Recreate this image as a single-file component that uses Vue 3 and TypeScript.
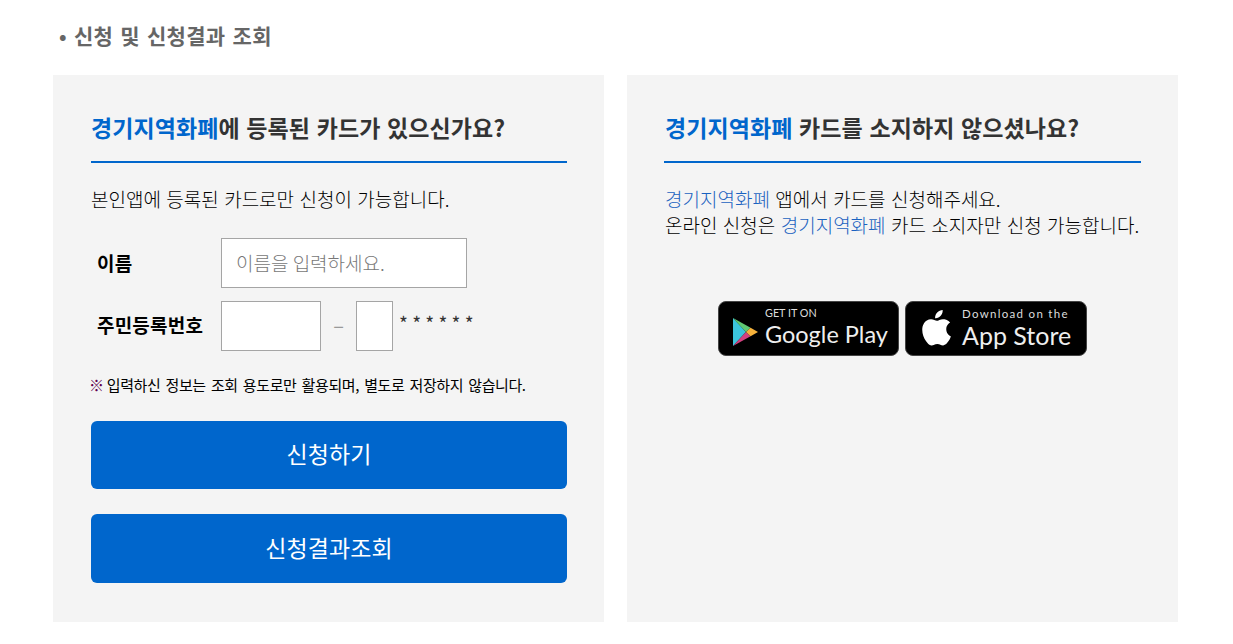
<template>
  <div class="page">
    <h2 class="page-title"><span class="bullet">•</span>신청 및 신청결과 조회</h2>
    <div class="panels">
      <!-- 카드 소지자 -->
      <section class="panel">
        <h3 class="panel-title"><span class="blue">경기지역화폐</span>에 등록된 카드가 있으신가요?</h3>
        <p class="desc">본인앱에 등록된 카드로만 신청이 가능합니다.</p>
        <div class="form-row">
          <label class="label">이름</label>
          <input class="input name" type="text" placeholder="이름을 입력하세요." />
        </div>
        <div class="form-row second">
          <label class="label">주민등록번호</label>
          <input class="input front" type="text" />
          <span class="dash">–</span>
          <input class="input back" type="text" />
          <span class="stars">* * * * * *</span>
        </div>
        <p class="notice"><span class="mark">※</span> 입력하신 정보는 조회 용도로만 활용되며, 별도로 저장하지 않습니다.</p>
        <button class="btn" type="button"><span class="btn-text">신청하기</span></button>
        <button class="btn last" type="button"><span class="btn-text">신청결과조회</span></button>
      </section>

      <!-- 카드 미소지자 -->
      <section class="panel right">
        <h3 class="panel-title"><span class="blue">경기지역화폐</span> 카드를 소지하지 않으셨나요?</h3>
        <p class="desc">
          <span class="link">경기지역화폐</span> 앱에서 카드를 신청해주세요.<br />
          온라인 신청은 <span class="link">경기지역화폐</span> 카드 소지자만 신청 가능합니다.
        </p>
        <div class="badges">
          <a class="badge play">
            <svg class="play-icon" viewBox="0 0 27 30" width="25" height="28">
              <path d="M0 0 L14 15 L0 30 Z" fill="#3bc4dc" />
              <path d="M0 0 L19 10.500 L14 15 Z" fill="#5fc873" />
              <path d="M0 30 L14 15 L19 19.500 Z" fill="#d2407f" />
              <path d="M19 10.500 L27 15 L19 19.500 L14 15 Z" fill="#f7b23c" />
            </svg>
            <span class="badge-text">
              <span class="small play-small">GET IT ON</span>
              <span class="big">Google Play</span>
            </span>
          </a>
          <a class="badge apple">
            <svg class="apple-icon" viewBox="2 1 25 31" width="29" height="36">
              <path fill="#fff" d="M19.8 1c.2 2-.6 3.700-1.700 5-1.200 1.300-2.900 2.300-4.800 2.100-.2-1.900.7-3.800 1.800-5C16.300 1.900 18.200 1 19.800 1zM26.200 11.700c-.2.100-3.300 1.900-3.300 5.800 0 4.500 3.900 6 4 6.100-.1.200-.6 2.200-2 4.200-1.300 1.800-2.600 3.600-4.700 3.700-2 0-2.700-1.200-5-1.200s-3.100 1.200-5 1.200c-2 .1-3.500-1.900-4.800-3.700C2.800 24.100.8 17.400 3.500 12.800c1.300-2.300 3.700-3.700 6.300-3.800 2 0 3.800 1.300 5 1.300s3.300-1.600 5.600-1.400c1 0 3.700.4 5.800 2.800z" />
            </svg>
            <span class="badge-text">
              <span class="small apple-small">Download on the</span>
              <span class="big apple-big">App Store</span>
            </span>
          </a>
        </div>
      </section>
    </div>
  </div>
</template>

<script setup lang="ts">
</script>

<style>
html,
body {
  margin: 0;
  background: #fff;
}
</style>

<style scoped>
.page {
  width: 1233px;
  height: 644px;
  overflow: hidden;
  box-sizing: border-box;
  padding: 0 55px 22px 53px;
  font-family: "Noto Sans CJK KR", "Noto Sans", sans-serif;
  color: #000;
}

.page-title {
  margin: 0;
  height: 75px;
  box-sizing: border-box;
  padding: 21px 0 0 6px;
  font-size: 21px;
  line-height: 29px;
  font-weight: 700;
  color: #666;
  letter-spacing: 0.3px;
  word-spacing: 2px;
}

.bullet {
  display: inline-block;
  width: 15px;
  font-size: 20px;
}

.panels {
  display: flex;
  gap: 23px;
  height: 547px;
}

.panel {
  width: 551px;
  box-sizing: border-box;
  padding: 0 37px 0 38px;
  background: #f4f4f4;
}

.panel.right {
  padding: 0 37px;
}

.panel-title {
  margin: 0;
  height: 88px;
  box-sizing: border-box;
  padding-top: 34px;
  border-bottom: 2px solid #0066cc;
  font-size: 23px;
  line-height: 36px;
  font-weight: 700;
  color: #333;
  letter-spacing: 0.1px;
  word-spacing: 1.2px;
  white-space: nowrap;
}

.right .panel-title,
.right .desc {
  padding-left: 1px;
}

.blue {
  color: #0066cc;
}

.desc {
  margin: 0;
  padding-top: 23px;
  font-size: 19px;
  line-height: 26px;
  font-weight: 300;
  word-spacing: 1.2px;
  white-space: nowrap;
}

.link {
  color: #1a62c0;
}

.form-row {
  display: flex;
  align-items: center;
  height: 50px;
  margin-top: 26px;
}

.form-row.second {
  margin-top: 13px;
}

.label {
  width: 130px;
  padding: 0 0 2px 6px;
  box-sizing: border-box;
  font-size: 19px;
  font-weight: 700;
  letter-spacing: 0.2px;
  white-space: nowrap;
}

.second .label {
  padding-bottom: 4px;
}

.input {
  height: 50px;
  box-sizing: border-box;
  border: 1px solid #a5a5a5;
  background: #fff;
  outline: none;
  font-family: inherit;
}

.input.name {
  width: 246px;
  padding: 0 14px 2px;
  font-size: 19px;
  font-weight: 300;
}

.input.name::placeholder {
  color: #777;
}

.input.front {
  width: 100px;
}

.input.back {
  width: 37px;
}

.dash {
  width: 35px;
  text-align: center;
  color: #999;
  font-size: 20px;
  padding-bottom: 4px;
}

.stars {
  align-self: flex-start;
  margin: 10px 0 0 6px;
  font-size: 19px;
  line-height: 24px;
  color: #333;
  white-space: nowrap;
}

.notice {
  margin: 0;
  padding: 23px 0 1px;
  font-size: 15px;
  line-height: 22px;
  letter-spacing: -0.4px;
  word-spacing: 2.2px;
  white-space: nowrap;
}

.mark {
  margin: 0 -2px 0 -2px;
  color: #60004f;
}

.btn {
  display: block;
  width: 476px;
  height: 68px;
  margin-top: 24px;
  border: none;
  border-radius: 6px;
  background: #0066cc;
  color: #fff;
  font-family: inherit;
  font-size: 23px;
  letter-spacing: 0.1px;
}

.btn-text {
  position: relative;
  top: -2px;
}

.btn.last {
  height: 69px;
  margin-top: 25px;
}

.badges {
  display: flex;
  gap: 6px;
  margin: 63px 0 0 54px;
}

.badge {
  display: flex;
  align-items: center;
  height: 55px;
  box-sizing: border-box;
  border: 1px solid #444;
  border-radius: 8px;
  background: #000;
  color: #fff;
  font-family: Lato, sans-serif;
}

.badge.play {
  width: 181px;
  padding-left: 14px;
}

.badge.apple {
  width: 182px;
  padding-left: 16px;
}

.play-icon {
  margin-top: 6px;
}

.apple-icon {
  margin-top: -1px;
}

.badge-text {
  display: flex;
  flex-direction: column;
  white-space: nowrap;
}

.play .badge-text {
  margin-left: 7px;
  margin-top: -3px;
}

.apple .badge-text {
  margin-left: 11px;
}

.small {
  font-size: 10.800px;
  line-height: 13px;
  color: #ddd;
}

.apple-small {
  font-size: 11.500px;
  letter-spacing: 1.300px;
}

.big {
  font-size: 23.500px;
  line-height: 30px;
  color: #eee;
}

.apple-big {
  font-size: 25px;
}
</style>
